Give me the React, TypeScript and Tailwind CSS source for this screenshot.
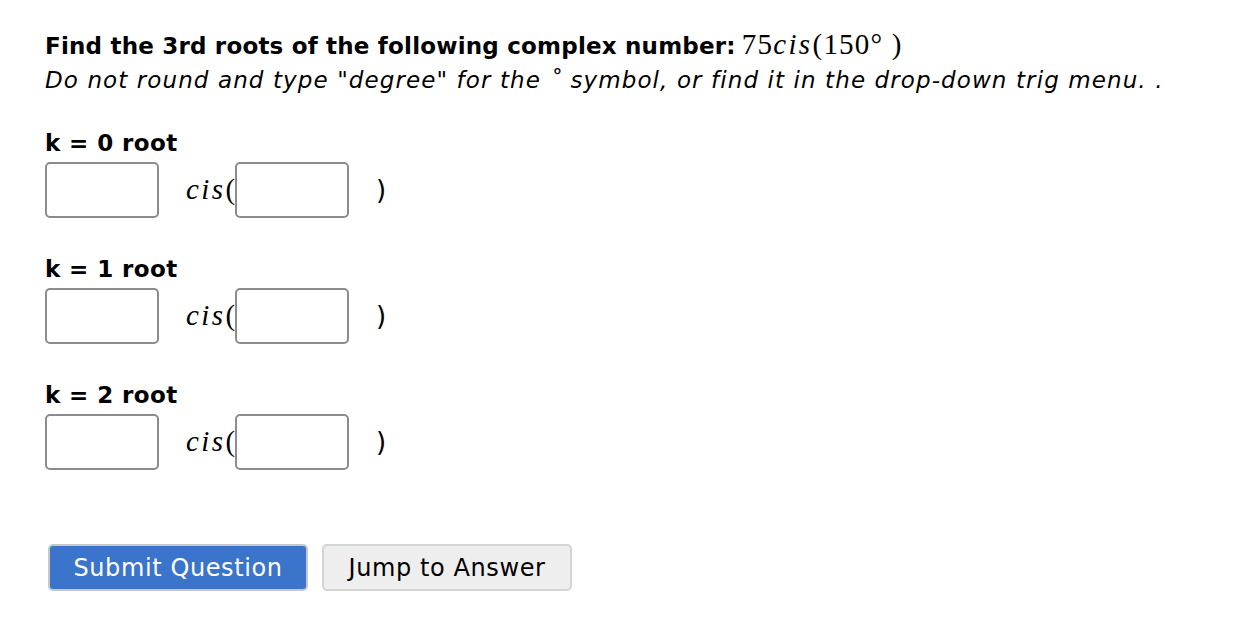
import { useState } from "react";

const rows = [0, 1, 2];

function RootRow({ k }: { k: number }) {
  const [mod, setMod] = useState("");
  const [arg, setArg] = useState("");
  return (
    <div className="flex flex-col">
      <div className="font-bold text-[23px] leading-[26px] tracking-[0.4px]">k = {k} root</div>
      <div className="flex items-center mt-[6px] h-[56px]">
        <input
          value={mod}
          onChange={(e) => setMod(e.target.value)}
          className="w-[114px] h-[56px] rounded-[5px] border-2 border-[#8c8c8c] bg-white outline-none px-2"
        />
        <span className="ml-[27px] text-[29px] italic tracking-[2.4px] font-['Liberation_Serif',serif]">cis</span>
        <span className="text-[29px] font-['Liberation_Serif',serif]">(</span>
        <input
          value={arg}
          onChange={(e) => setArg(e.target.value)}
          className="w-[114px] h-[56px] rounded-[5px] border-2 border-[#8c8c8c] bg-white outline-none px-2"
        />
        <span className="ml-[27px] text-[26px]">)</span>
      </div>
    </div>
  );
}

export default function App() {
  return (
    <div className="min-h-[634px] bg-white text-black font-['DejaVu_Sans',sans-serif] pl-[45px] pt-[27px]">
      <div className="text-[23px] leading-[34px] flex items-baseline">
        <span className="font-bold tracking-[0.2px]">Find the 3rd roots of the following complex number:</span>
        <span className="font-['Liberation_Serif',serif] text-[29px] ml-[6px] tracking-[1.2px]">
          75<i className="tracking-[2.4px]">cis</i>(150°&nbsp;)
        </span>
      </div>
      <div className="italic text-[23px] leading-[34px] tracking-[1.1px]">
        Do not round and type "degree" for the ˚ symbol, or find it in the drop-down trig menu. .
      </div>
      <div className="flex flex-col gap-[38px] mt-[33px]">
        {rows.map((k) => (
          <RootRow key={k} k={k} />
        ))}
      </div>
      <div className="flex gap-[14px] mt-[74px] ml-[3px]">
        <button className="w-[260px] h-[47px] rounded-[5px] border-2 border-[#c8c8c8] bg-[#3a74cb] text-white text-[24px] tracking-[0.6px]">
          Submit Question
        </button>
        <button className="w-[250px] h-[47px] rounded-[5px] border-2 border-[#d4d4d4] bg-[#eeeeee] text-black text-[24px] tracking-[0.6px]">
          Jump to Answer
        </button>
      </div>
    </div>
  );
}
